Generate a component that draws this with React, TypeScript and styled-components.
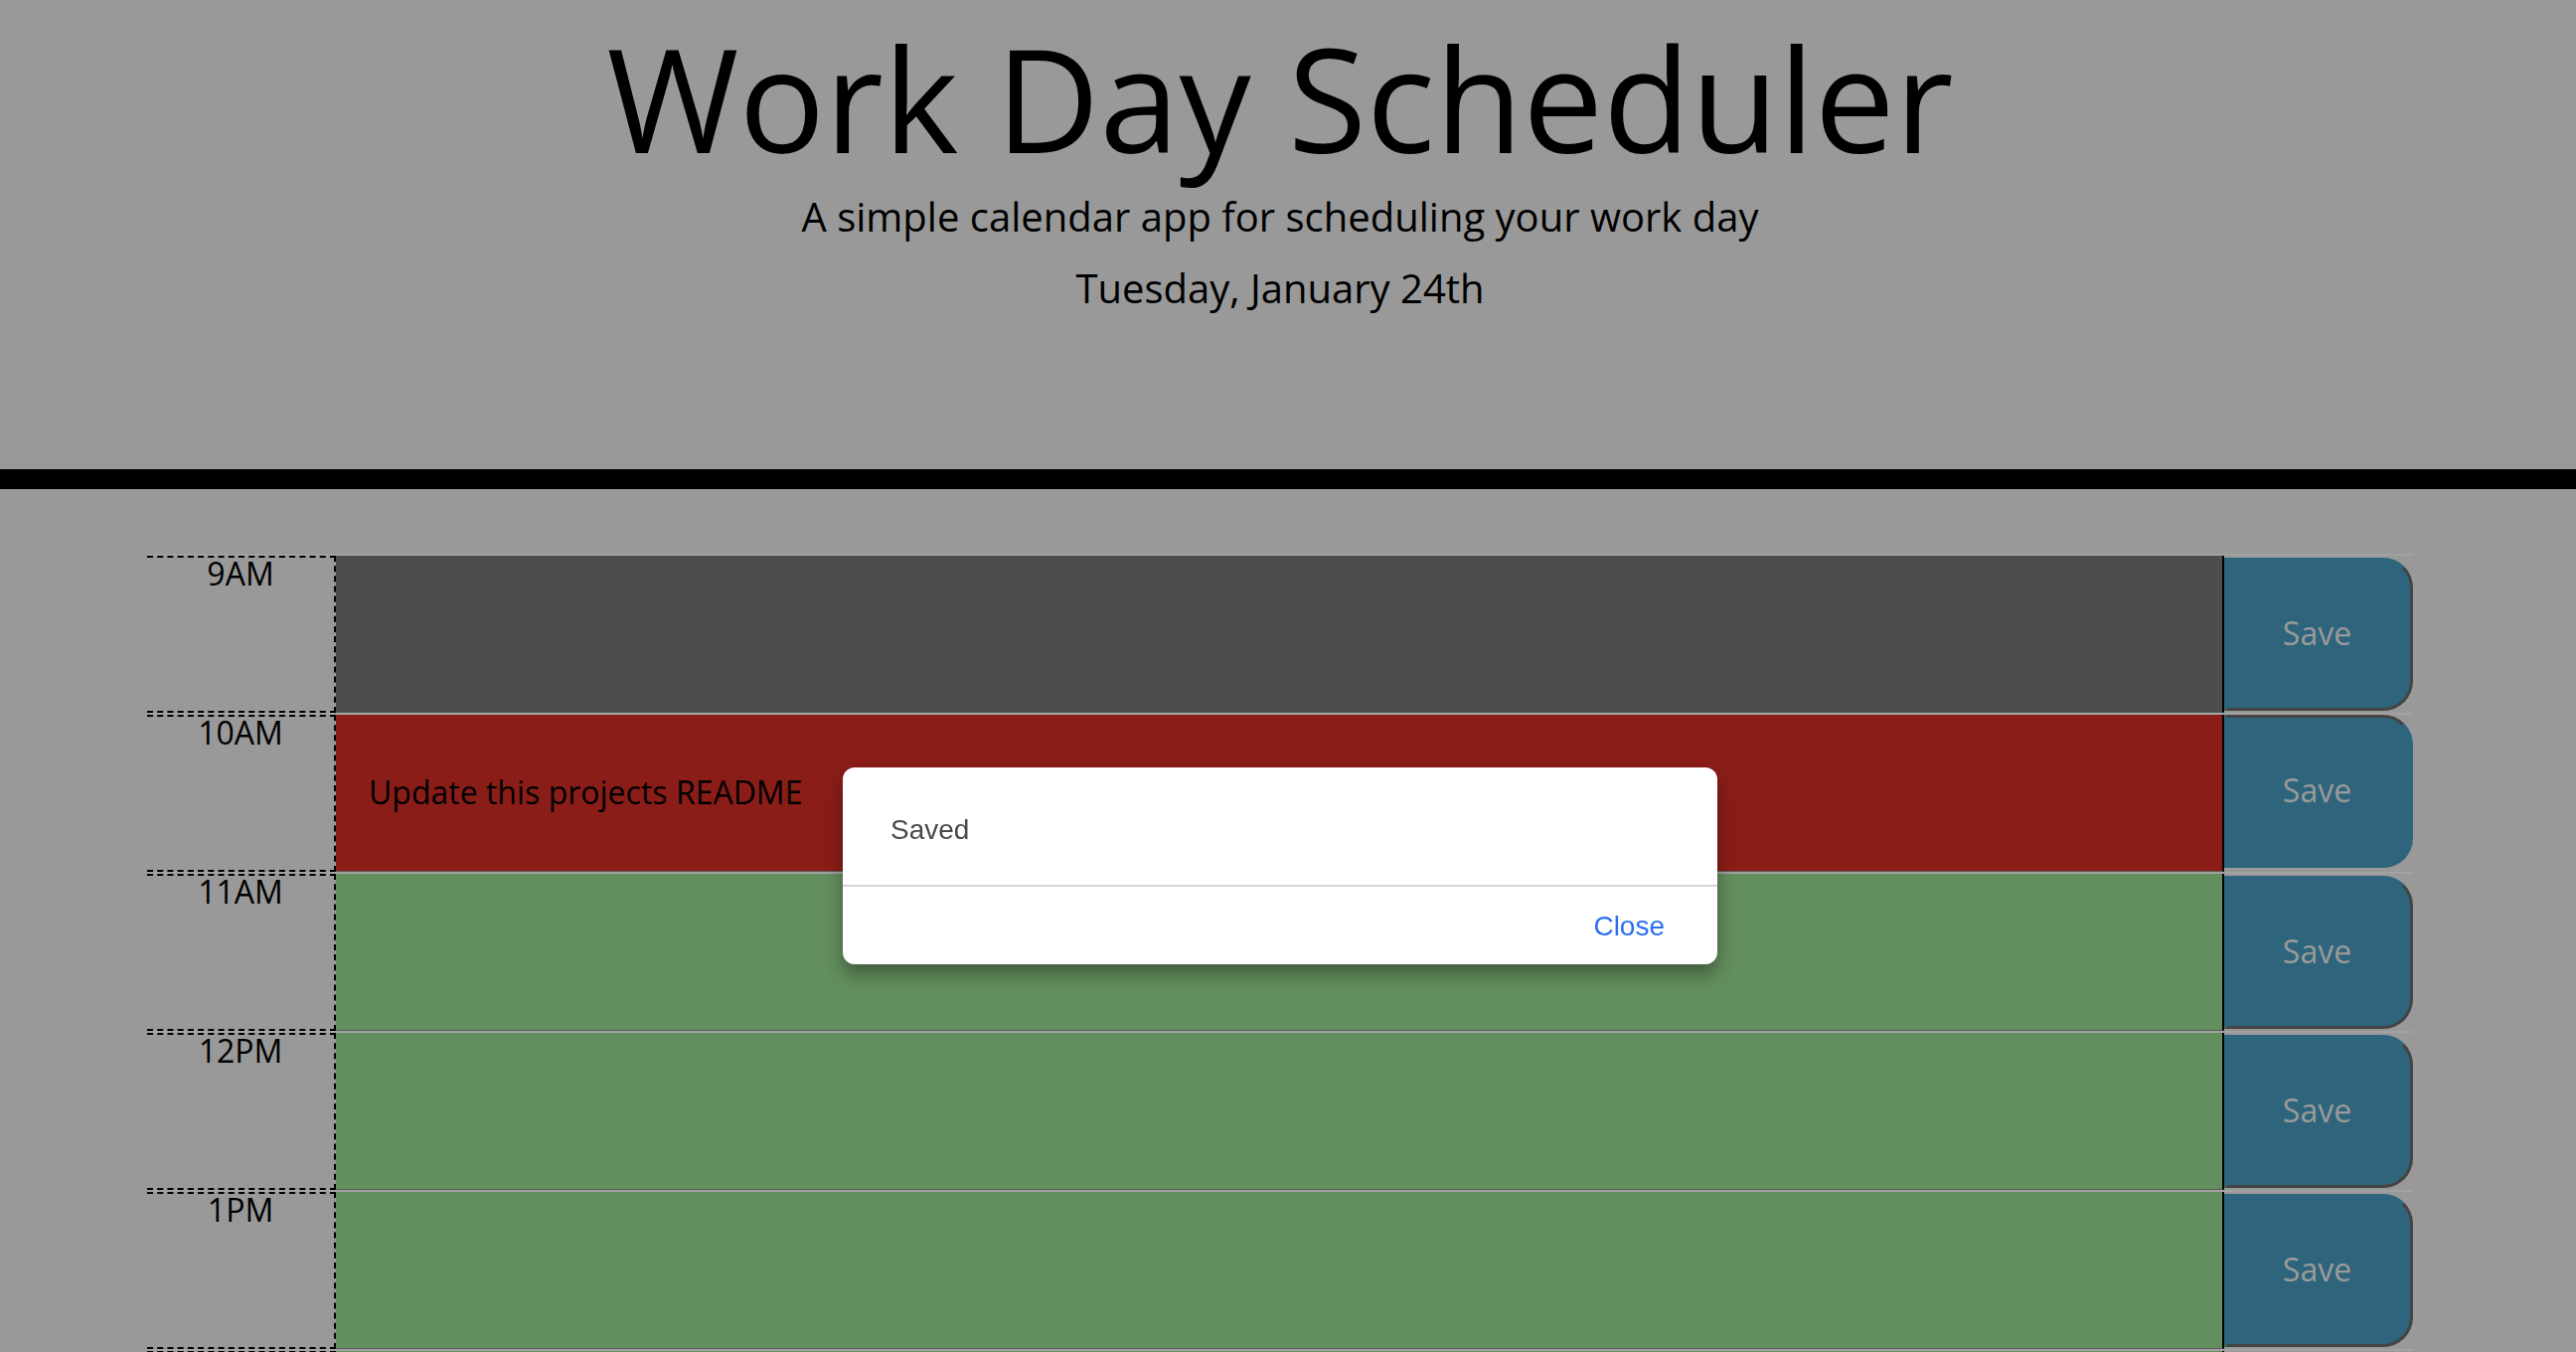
import React from "react";
import styled, { createGlobalStyle, css } from "styled-components";

const GlobalStyle = createGlobalStyle`
  html, body {
    margin: 0;
    padding: 0;
    background: #999999;
    overflow: hidden;
  }
  body {
    font-family: "Open Sans", "Noto Sans", sans-serif;
    line-height: 1;
  }
  * { box-sizing: border-box; }
`;

const Page = styled.div`
  width: 100%;
  height: 1360px;
  overflow: hidden;
`;

const Header = styled.header`
  height: 492px;
  padding: 26px 16px 0 0;
  text-align: center;
  color: #000;
  border-bottom: 20px solid #000;
`;

const Title = styled.h1`
  margin: 0;
  font-size: 144px;
  font-weight: 400;
  line-height: 1;
`;

const Lead = styled.p<{ $gap: number }>`
  margin: ${(p) => p.$gap}px 0 0;
  font-size: 40px;
  font-weight: 400;
  line-height: 1;
`;

const Container = styled.main`
  width: 2280px;
  margin: 65px 0 0 148px;
`;

const Row = styled.div`
  display: grid;
  grid-template-columns: 190px 1900px 190px;
  height: 160px;
  border-top: 2px solid #a2a2a2;
`;

const Hour = styled.div`
  border-top: 2px dashed #000;
  border-bottom: 2px dashed #000;
  border-right: 2px dashed #000;
  text-align: center;
  font-size: 32px;
  line-height: 1;
  color: #000;
`;

type Status = "past" | "present" | "future";

const statusColor: Record<Status, string> = {
  past: "#4d4d4d",
  present: "#8a1d18",
  future: "#638e5d",
};

const Description = styled.textarea<{ $status: Status }>`
  display: block;
  width: 100%;
  height: 100%;
  margin: 0;
  padding: 62px 33px 0;
  border: none;
  border-right: 2px solid #000;
  border-bottom: 1px solid #5a5a5a;
  resize: none;
  outline: none;
  background: ${(p) => statusColor[p.$status]};
  color: #000;
  font-family: "Open Sans", "Noto Sans", sans-serif;
  font-size: 32px;
  line-height: 1;
  overflow: hidden;
`;

const SaveButton = styled.button<{ $pressed?: boolean }>`
  align-self: stretch;
  margin: 2px 0 2px;
  padding: 0 3px 2px 0;
  background: #2e657c;
  color: #9a9a9a;
  font-family: "Open Sans", "Noto Sans", sans-serif;
  font-size: 32px;
  line-height: 1;
  border: 3px solid;
  border-color: #2e657c #444444 #444444 #2e657c;
  border-radius: 0 30px 30px 0;
  cursor: pointer;
  ${(p) =>
    p.$pressed &&
    css`
      margin: 0 0 4px;
      border-color: #444444 #2e657c #2e657c #2e657c;
    `}
`;

const Modal = styled.div`
  position: fixed;
  left: 848px;
  top: 772px;
  width: 880px;
  background: #ffffff;
  border-radius: 12px;
  box-shadow: 0 10px 18px rgba(0, 0, 0, 0.35);
  font-family: "Liberation Sans", Arial, sans-serif;
`;

const ModalBody = styled.div`
  padding: 49px 48px 41px;
  font-size: 28px;
  line-height: 1;
  color: #4a4a4a;
`;

const ModalFooter = styled.div`
  display: flex;
  justify-content: flex-end;
  padding: 26px 53px 24px;
  border-top: 2px solid #d6d6d6;
`;

const CloseButton = styled.button`
  padding: 0;
  border: none;
  background: none;
  color: #2b6ef2;
  font-family: "Liberation Sans", Arial, sans-serif;
  font-size: 28px;
  line-height: 1;
  cursor: pointer;
`;

const hours: { label: string; status: Status; text: string; pressed?: boolean }[] = [
  { label: "9AM", status: "past", text: "" },
  { label: "10AM", status: "present", text: "Update this projects README", pressed: true },
  { label: "11AM", status: "future", text: "" },
  { label: "12PM", status: "future", text: "" },
  { label: "1PM", status: "future", text: "" },
  { label: "2PM", status: "future", text: "" },
  { label: "3PM", status: "future", text: "" },
];

export default function App() {
  return (
    <Page>
      <GlobalStyle />
      <Header>
        <Title>Work Day Scheduler</Title>
        <Lead $gap={28}>A simple calendar app for scheduling your work day</Lead>
        <Lead $gap={32}>Tuesday, January 24th</Lead>
      </Header>
      <Container>
        {hours.map((h) => (
          <Row key={h.label}>
            <Hour>{h.label}</Hour>
            <Description $status={h.status} defaultValue={h.text} />
            <SaveButton $pressed={h.pressed}>Save</SaveButton>
          </Row>
        ))}
      </Container>
      <Modal>
        <ModalBody>Saved</ModalBody>
        <ModalFooter>
          <CloseButton>Close</CloseButton>
        </ModalFooter>
      </Modal>
    </Page>
  );
}
